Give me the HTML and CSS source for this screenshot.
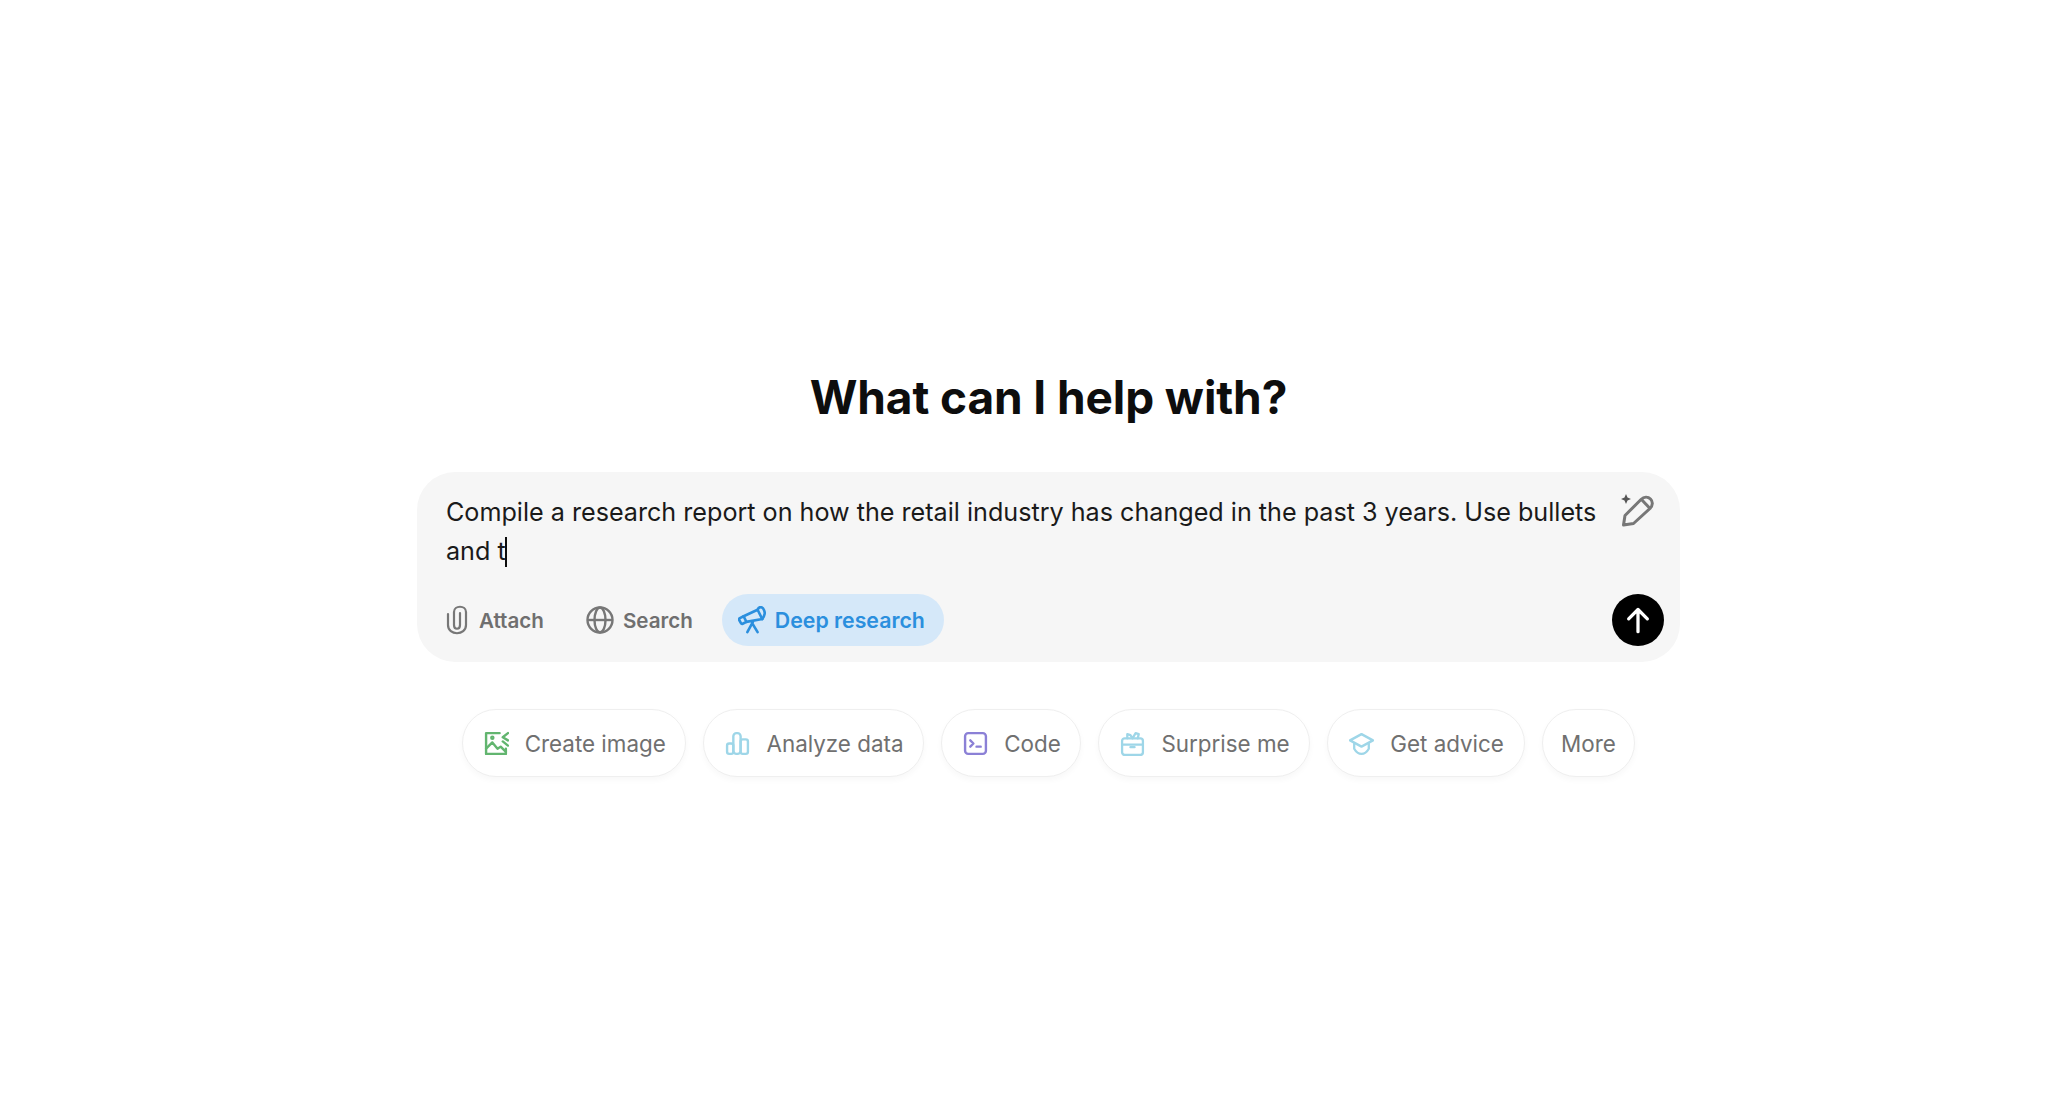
FILE: index.html
```html
<!DOCTYPE html>
<html lang="en">
<head>
    <meta charset="UTF-8">
    <meta name="viewport" content="width=device-width, initial-scale=1.0">
    <title>ChatGPT</title>
    <link rel="stylesheet" href="styles.css">
</head>
<body>
    <main class="container">
        <h1>What can I help with?</h1>
        <div class="composer">
            <div class="row">
                <p class="prompt">Compile a research report on how the retail industry has changed in the past 3 years. Use bullets and t<span class="caret"></span></p>
                <svg class="edit" viewBox="0 0 34 34" fill="none" stroke="#777" stroke-width="3" stroke-linejoin="round">
                    <path d="M3.500 31l1.500-9.500L21 5.500c3-3 7-3 9.500-.5s2.500 6.500-.5 9.500L13.500 29.500z"/>
                    <path d="M21.500 5.500l8.500 9"/>
                    <path d="M6 0l1.500 3.500L11 5 7.500 6.500 6 10 4.500 6.500 1 5l3.500-1.500z" fill="#555" stroke="none"/>
                </svg>
            </div>
            <div class="row tools">
                <button class="tool attach">
                    <svg class="tool-icon" viewBox="0 0 22 30" fill="none" stroke="#777" stroke-width="2.200" stroke-linecap="round">
                        <path d="M2 9v11c0 11 18 11 18 0V7C20 0 8 0 8 7v13c0 5 6 5 6 0V8"/>
                    </svg>
                    Attach
                </button>
                <button class="tool search">
                    <svg class="tool-icon" viewBox="0 0 28 28" fill="none" stroke="#777" stroke-width="2.400">
                        <circle cx="14" cy="14" r="12.500"/>
                        <ellipse cx="14" cy="14" rx="5.500" ry="12.500"/>
                        <path d="M2 14h24"/>
                    </svg>
                    Search
                </button>
                <button class="tool active">
                    <svg class="tool-icon" viewBox="0 0 30 30" fill="none" stroke="#2b8fde" stroke-width="2.800" stroke-linecap="round" stroke-linejoin="round">
                        <path d="M2 13l4-2 3 6-4 2c-1 .4-1.500 0-2-1l-1.700-3c-.4-.8 0-1.500.7-2z"/>
                        <path d="M6 11L21 4l5 10-17 3"/>
                        <path d="M21 4c1-2.500 3-3 4.500-2.500 2 1 3.500 4.500 3 7-.3 2-1.200 3.500-2.500 5.500"/>
                        <path d="M16 17l-6 11M15 18l6 10"/>
                    </svg>
                    Deep research
                </button>
                <button class="send">
                    <svg viewBox="0 0 24 24" fill="none" stroke="#fff" stroke-width="2.800" stroke-linecap="round" stroke-linejoin="round">
                        <path d="M12 22V3M4 11l8-8 8 8"/>
                    </svg>
                </button>
            </div>
        </div>
        <div class="pills">
            <button class="pill">
                <svg viewBox="0 0 24 24" fill="none" stroke="#62b56f" stroke-width="2.300" stroke-linecap="round" stroke-linejoin="round">
                    <path d="M15 2H2v20h19v-5"/>
                    <path d="M2 17l6-6 5 6 3-2 5 5"/>
                    <circle cx="8" cy="6.500" r="1"/>
                    <path d="M23 2l-5 4 5 3M18 10l5 4"/>
                </svg>
                Create image
            </button>
            <button class="pill">
                <svg viewBox="0 0 24 24" fill="none" stroke="#9ed6e8" stroke-width="2.300" stroke-linejoin="round">
                    <rect x="2" y="12" width="6" height="10" rx="2"/>
                    <rect x="8" y="2" width="7" height="20" rx="3"/>
                    <rect x="15" y="8" width="7" height="14" rx="2"/>
                </svg>
                Analyze data
            </button>
            <button class="pill">
                <svg viewBox="0 0 24 24" fill="none" stroke="#8b80d6" stroke-width="2.300" stroke-linecap="round" stroke-linejoin="round">
                    <rect x="2" y="2" width="20" height="20" rx="3"/>
                    <path d="M7 9l3 3-3 3M13 15h4"/>
                </svg>
                Code
            </button>
            <button class="pill">
                <svg viewBox="0 0 24 24" fill="none" stroke="#9ed6e8" stroke-width="2.200" stroke-linecap="round" stroke-linejoin="round">
                    <rect x="2" y="7" width="20" height="16" rx="2.500"/>
                    <path d="M2 13h20M10 15.500h4"/>
                    <path d="M7 7V3l3 1 2 3M12 7l3-5 3 1-1 4"/>
                </svg>
                Surprise me
            </button>
            <button class="pill">
                <svg viewBox="0 0 24 24" fill="none" stroke="#9ed6e8" stroke-width="2.200" stroke-linecap="round" stroke-linejoin="round">
                    <path d="M12 3L1 9l11 6 11-6z"/>
                    <path d="M5 12v5c2 3.500 4 5 7 5s5-1.500 7-5v-5"/>
                </svg>
                Get advice
            </button>
            <button class="pill more">More</button>
        </div>
    </main>
</body>
</html>
```

FILE: styles.css
```css
body{
    margin:0;
    padding:0;
    background:#fff;
    font-family:Inter,"Liberation Sans",sans-serif;
}
.container{
    width:100%;
    min-height:1102px;
    box-sizing:border-box;
    padding:368px 0 0 29px;
    display:flex;
    flex-direction:column;
    align-items:center;
}
h1{
    margin:0 0 46px 0;
    font-size:46px;
    line-height:58px;
    font-weight:700;
    letter-spacing:-0.1px;
    color:#0d0d0d;
}
.composer{
    width:1263px;
    height:190px;
    box-sizing:border-box;
    padding:21px 16px 16px 29px;
    background-color:#f6f6f6;
    border-radius:38px;
    display:flex;
    flex-direction:column;
    justify-content:space-between;
}
.row{
    display:flex;
    justify-content:space-between;
    align-items:flex-start;
}
.prompt{
    margin:0;
    width:1160px;
    font-size:25.150px;
    line-height:39px;
    color:#1a1a1a;
}
.caret{
    display:inline-block;
    width:2px;
    height:30px;
    margin-left:-1px;
    vertical-align:-7px;
    background:#0d0d0d;
}
.edit{
    width:34px;
    height:34px;
    margin:1px 10px 0 0;
}
.tools{
    align-items:center;
    justify-content:flex-start;
}
button{
    border:none;
    outline:none;
    background:none;
    font-family:inherit;
    cursor:pointer;
}
.tool{
    display:flex;
    align-items:center;
    height:52px;
    padding:0;
    font-size:20.600px;
    font-weight:600;
    color:#6f6f6f;
}
.tool-icon{
    margin-right:9px;
}
.attach{
    margin-right:42px;
}
.attach .tool-icon{
    width:22px;
    height:30px;
    margin-right:11px;
}
.search{
    margin-right:29px;
}
.search .tool-icon{
    width:28px;
    height:28px;
}
.tool.active{
    padding:0 19px 0 16px;
    border-radius:26px;
    background-color:#d5e8f9;
    color:#2b8fde;
    font-size:21.300px;
}
.active .tool-icon{
    width:28px;
    height:28px;
    margin-right:9px;
}
.send{
    width:52px;
    height:52px;
    margin-left:auto;
    padding:12px;
    border-radius:50%;
    background:#000;
}
.send svg{
    display:block;
}
.pills{
    display:flex;
    gap:17px;
    margin-top:47px;
}
.pill{
    display:flex;
    align-items:center;
    gap:16px;
    height:68px;
    box-sizing:border-box;
    padding:0 19.700px 0 21px;
    border:1.500px solid #efefef;
    border-radius:34px;
    background:#fff;
    box-shadow:0 3px 6px rgba(0,0,0,0.03);
    font-size:22.400px;
    color:#707070;
}
.pill.more{
    padding:0 18.500px;
}
.pill svg{
    width:25px;
    height:25px;
}
```
